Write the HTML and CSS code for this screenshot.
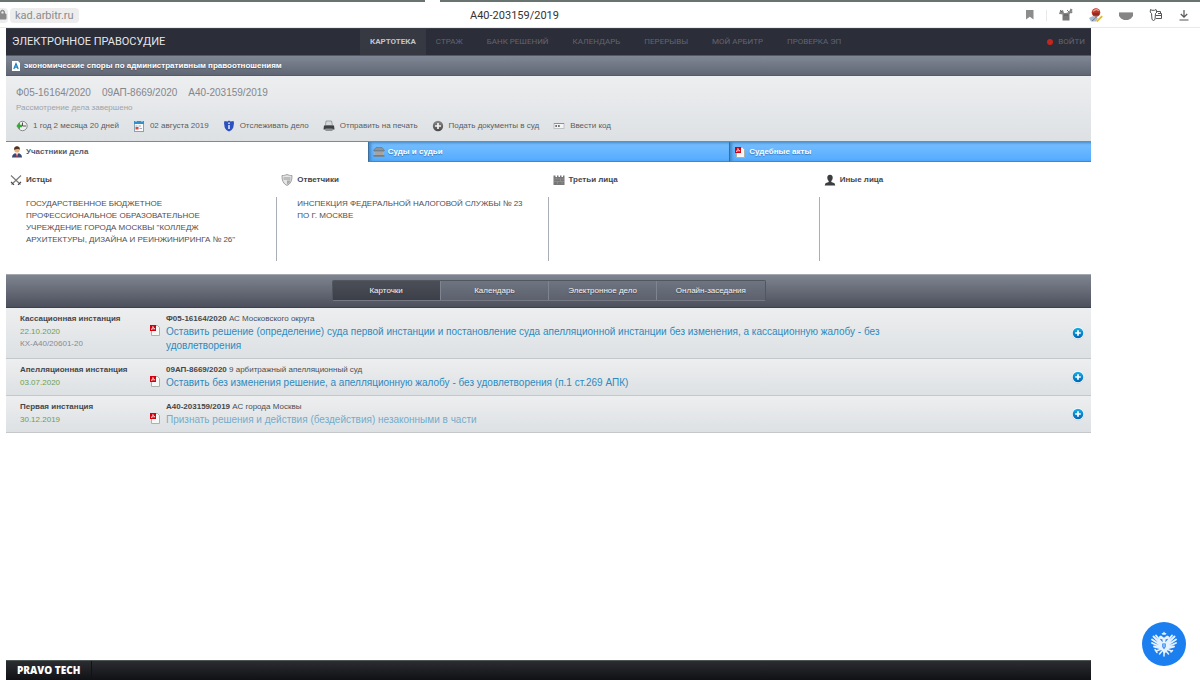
FILE: index.html
```html
<!DOCTYPE html>
<html lang="ru">
<head>
<meta charset="utf-8">
<title>А40-203159/2019</title>
<link rel="stylesheet" href="styles.css">
</head>
<body>
<svg class="defs" aria-hidden="true">
  <defs>
    <linearGradient id="blue" x1="0" y1="0" x2="0" y2="1"><stop offset="0" stop-color="#18b0ea"/><stop offset="1" stop-color="#0064b4"/></linearGradient>
    <linearGradient id="gray" x1="0" y1="0" x2="0" y2="1"><stop offset="0" stop-color="#8a8a8a"/><stop offset="1" stop-color="#484848"/></linearGradient>
    <symbol id="pdf" viewBox="0 0 12 12">
      <path d="M2.500 1.500h6l2 2v8h-8z" fill="#f6f8f6" stroke="#a9b3ab"/>
      <rect x="1" y="1" width="6" height="6" fill="#d4000e"/>
      <path d="M2.200 5.400C3.600 4.800 4 3.600 3.900 2.400c.3 1.400 1 2.200 2.200 2.400-1.500-.2-2.600 0-3.900.6z" fill="none" stroke="#fff" stroke-width=".7"/>
    </symbol>
    <symbol id="plus" viewBox="0 0 14 14">
      <circle cx="7" cy="7.600" r="6.200" fill="#cfd5da"/>
      <circle cx="7" cy="7" r="5.900" fill="#fff"/>
      <circle cx="7" cy="7" r="5.300" fill="url(#blue)"/>
      <path d="M7 4.200v5.600M4.200 7h5.600" stroke="#fff" stroke-width="1.700"/>
    </symbol>
  </defs>
</svg>

<header class="browser">
  <div class="address">
    <span class="lock"><svg viewBox="0 0 10 12" width="10" height="12"><path d="M1 5h7v5H1zM2.500 5V3.200a2 2 0 0 1 4 0V5" fill="#8a8a8a" stroke="#8a8a8a"/><path d="M3.500 4.600V3.300a1 1 0 0 1 2 0v1.300z" fill="#ededed"/></svg></span>
    <span class="host">kad.arbitr.ru</span>
  </div>
  <div class="page-name">А40-203159/2019</div>
  <div class="tools">
    <svg width="8" height="10" viewBox="0 0 8 10"><path d="M0 0h7.500v9.600L3.800 6.800 0 9.600z" fill="#8c8c8c"/></svg>
    <span class="tools-line"></span>
    <svg width="14" height="14" viewBox="0 0 14 14"><path d="M3.500 6h7v6.500h-7z" fill="#777"/><path d="M0 6l1-3 3-1 1 3 2 0 3-1 1.500-3.500 2 1-1 3-2 1.500-3 1-3-.5z" fill="#858585"/><path d="M1 2l2 2M12 5l1.500-1M8 2l2 2M5 7h4" stroke="#555" stroke-width=".8"/></svg>
    <svg width="14" height="14" viewBox="0 0 14 14"><circle cx="7" cy="4.500" r="4.300" fill="#b93626"/><path d="M4.200 3.500c1-2 4-2.500 5.600-.6" stroke="#ec9c8f" stroke-width="1.300" fill="none"/><path d="M4 6h6" stroke="#63241c"/><path d="M0 10l4-2 5 2-2 3.500H2z" fill="#a9bbcf"/><path d="M7 13l5.500-5.500 1.300 1.300L8.500 14z" fill="#e5b82c"/><path d="M3 13c2-1 3-4 5-4" stroke="#68788c" fill="none"/></svg>
    <svg width="14" height="14" viewBox="0 0 14 14"><path d="M0 5h14v3l-2 2.500-3 1.500H5L2 10.500 0 8z" fill="#858585"/><path d="M0 4.500h14" stroke="#b5b5b5"/></svg>
    <svg width="14" height="14" viewBox="0 0 14 14" fill="none" stroke="#555"><path d="M1.500 1.500l1.500.8h2.500l1.500-.8 1 2.500-1.500 1.500-.5 6-1.500 1-1.500-1-.5-6L1.200 4z"/><path d="M7.500 4.500v-1h4v2M7 7.500h5.500M7 10.500h5.500v-5H9"/></svg>
    <svg width="10" height="12" viewBox="0 0 10 12" fill="none" stroke="#555" stroke-width="1.200"><path d="M5 1v7M1.800 5L5 8.200 8.200 5M.5 11h9"/></svg>
  </div>
</header>

<main class="portal">
  <div class="masthead">
    <a class="brand" href="#">ЭЛЕКТРОННОЕ ПРАВОСУДИЕ</a>
    <nav class="menu">
      <a class="menu-item active" href="#">КАРТОТЕКА</a>
      <a class="menu-item" href="#">СТРАЖ</a>
      <a class="menu-item" href="#">БАНК РЕШЕНИЙ</a>
      <a class="menu-item" href="#">КАЛЕНДАРЬ</a>
      <a class="menu-item" href="#">ПЕРЕРЫВЫ</a>
      <a class="menu-item" href="#">МОЙ АРБИТР</a>
      <a class="menu-item" href="#">ПРОВЕРКА ЭП</a>
    </nav>
    <a class="login" href="#">ВОЙТИ</a>
  </div>

  <h1 class="category">
    <svg width="8" height="10" viewBox="0 0 8 10"><path d="M0 0h6l2 2v8H0z" fill="#fff"/><path d="M1.800 8L4 2.500 6.200 8M2.700 6.200h2.600" stroke="#1580bd" stroke-width="1.200" fill="none"/></svg>
    экономические споры по административным правоотношениям
  </h1>

  <section class="summary">
    <ul class="numbers"><li>Ф05-16164/2020</li><li>09АП-8669/2020</li><li>А40-203159/2019</li></ul>
    <p class="status">Рассмотрение дела завершено</p>
    <ul class="actions">
      <li><svg width="12" height="12" viewBox="0 0 12 12"><circle cx="6.500" cy="6" r="4.700" fill="#eef0ef" stroke="#858b88"/><path d="M6.500 2.500V6H10" fill="none" stroke="#555"/><path d="M6 4.700H4V2.500L.3 6 4 9.500V7.300h2z" fill="#31ad31"/></svg><span>1 год 2 месяца 20 дней</span></li>
      <li><svg width="12" height="12" viewBox="0 0 12 12"><rect x="1.500" y="1.500" width="9" height="10" fill="#f8fafc" stroke="#8aa1b3"/><path d="M1 1h10v3H1z" fill="#3291cc"/><path d="M3 0v2M9 0v2" stroke="#d5e9f5"/><path d="M2.500 6h2M5.500 6H8" stroke="#9aabb8"/><path d="M2.500 7h3v2.500h-3z" fill="#d8483e"/><path d="M6.500 8.500H9" stroke="#9aabb8"/></svg><span>02 августа 2019</span></li>
      <li><a href="#"><svg width="12" height="12" viewBox="0 0 12 12"><path d="M6 .5l1.500 1 3-.5L11 3l-.7 4.500C9.500 9.500 8 10.700 6 11.500 4 10.700 2.500 9.500 1.700 7.500L1 3l.5-2 3 .5z" fill="#2c50c2"/><path d="M6 2.500v1.500M6 5v4" stroke="#dce7ff" stroke-width="1.600"/></svg><span>Отслеживать дело</span></a></li>
      <li><a href="#"><svg width="12" height="12" viewBox="0 0 12 12"><path d="M3 1h5.500l1 4.500h-7z" fill="#d5d9dc" stroke="#80868a" stroke-width=".7"/><path d="M1 5.500h10l.5 4h-11z" fill="#3e4143"/><path d="M2.500 8.500h7V11h-7z" fill="#8d9295"/></svg><span>Отправить на печать</span></a></li>
      <li><a href="#"><svg width="12" height="12" viewBox="0 0 12 12"><circle cx="6" cy="6" r="5.200" fill="url(#gray)"/><path d="M6 3v6M3 6h6" stroke="#f4f4f4" stroke-width="1.700"/></svg><span>Подать документы в суд</span></a></li>
      <li><a href="#"><svg width="12" height="12" viewBox="0 0 12 12"><rect x="1" y="3.500" width="10" height="5" fill="#f5f5f5" stroke="#bfc2c4"/><path d="M1 3.500h10" stroke="#8e9193"/><path d="M2.300 6h1.700M5 6h1.700M3.200 5v2M5.900 5v2" stroke="#505254"/></svg><span>Ввести код</span></a></li>
    </ul>
  </section>

  <nav class="tabs">
    <button class="tab current" type="button"><svg width="12" height="12" viewBox="0 0 12 12"><path d="M1 11.500C1 8.500 3 7 6 7s5 1.500 5 4.500z" fill="#394b75"/><path d="M4.500 7h3L6 10.500z" fill="#fff"/><path d="M5.600 7.500h.8L6.700 11H5.300z" fill="#c33"/><circle cx="6" cy="4" r="2.600" fill="#eab07e"/><path d="M3.200 4C2.800 1 4.500.3 6 .3S9.200 1 8.800 4C8 2.500 5 3 3.200 4z" fill="#53321d"/></svg>Участники дела</button>
    <button class="tab" type="button"><svg width="12" height="12" viewBox="0 0 12 12"><path d="M.5 4.500L3 1.500h6l2.500 3z" fill="#8e9599" stroke="#667279" stroke-width=".6"/><path d="M1.500 5h9v4h-9z" fill="#b8b4aa"/><path d="M.5 9h11v1.800H.5zM1 4.500h10v1H1z" fill="#777d80"/><path d="M3 5.500V9M5 5.500V9M7 5.500V9M9 5.500V9" stroke="#888" stroke-width=".7"/></svg>Суды и судьи</button>
    <button class="tab" type="button"><svg width="12" height="12"><use href="#pdf"/></svg>Судебные акты</button>
  </nav>

  <section class="parties">
    <div class="party">
      <h2><svg width="12" height="12" viewBox="0 0 12 12"><path d="M1 1.500l9.500 9M11 1.500l-9.500 9" stroke="#777" stroke-width="1.100"/><path d="M1 7.800l3 3M11 7.800l-3 3" stroke="#444" stroke-width="1.200"/></svg>Истцы</h2>
      <p>ГОСУДАРСТВЕННОЕ БЮДЖЕТНОЕ ПРОФЕССИОНАЛЬНОЕ ОБРАЗОВАТЕЛЬНОЕ УЧРЕЖДЕНИЕ ГОРОДА МОСКВЫ "КОЛЛЕДЖ АРХИТЕКТУРЫ, ДИЗАЙНА И РЕИНЖИНИРИНГА № 26"</p>
    </div>
    <div class="party wide">
      <h2><svg width="12" height="12" viewBox="0 0 12 12"><path d="M1 1.500C3 1.800 4.500 1 6 .5 7.500 1 9 1.800 11 1.500c.3 5-1.500 8.500-5 10-3.500-1.500-5.300-5-5-10z" fill="#e5e5e5" stroke="#8d8d8d" stroke-width=".8"/><path d="M2.500 3h7v3h-7z" fill="#bdbdbd"/><path d="M6 6.500h3.500C9 8.500 8 9.800 6 10.500z" fill="#aaa"/></svg>Ответчики</h2>
      <p>ИНСПЕКЦИЯ ФЕДЕРАЛЬНОЙ НАЛОГОВОЙ СЛУЖБЫ № 23 ПО Г. МОСКВЕ</p>
    </div>
    <div class="party">
      <h2><svg width="12" height="12" viewBox="0 0 12 12"><path d="M.5 1.500h2v1.500h1.500V1.500h1.500V3H7V1.500h1.500V3H10V1.500h1.500V11H.5z" fill="#777"/><path d="M1 5h10M1 7.500h10M3.500 3.500V5M7.500 5v2.500M4.500 7.500V10M9 7.500V10" stroke="#999" stroke-width=".6"/></svg>Третьи лица</h2>
      <p></p>
    </div>
    <div class="party">
      <h2><svg width="12" height="12" viewBox="0 0 12 12"><path d="M6 .8c2 0 2.900 1.300 2.700 3.200C8.500 5.600 7.900 6.500 7.300 7v1l3.200 1.300.8 2.200H.7l.8-2.200L4.700 8V7C4.100 6.500 3.500 5.600 3.300 4 3.100 2.100 4 .8 6 .8z" fill="#3b3d3e"/></svg>Иные лица</h2>
      <p></p>
    </div>
  </section>

  <div class="views">
    <div class="switch">
      <button class="view selected" type="button">Карточки</button>
      <button class="view" type="button">Календарь</button>
      <button class="view" type="button">Электронное дело</button>
      <button class="view" type="button">Онлайн-заседания</button>
    </div>
  </div>

  <section class="instances">
    <article class="instance">
      <div class="stage"><h3>Кассационная инстанция</h3><span class="date">22.10.2020</span><span class="ref">КХ-А40/20601-20</span></div>
      <svg class="doc" width="12" height="12"><use href="#pdf"/></svg>
      <div class="result"><p><b>Ф05-16164/2020</b> АС Московского округа</p><a href="#">Оставить решение (определение) суда первой инстанции и постановление суда апелляционной инстанции без изменения, а кассационную жалобу - без удовлетворения</a></div>
      <button class="expand" type="button" aria-label="Развернуть"><svg width="14" height="14"><use href="#plus"/></svg></button>
    </article>
    <article class="instance">
      <div class="stage"><h3>Апелляционная инстанция</h3><span class="date">03.07.2020</span></div>
      <svg class="doc" width="12" height="12"><use href="#pdf"/></svg>
      <div class="result"><p><b>09АП-8669/2020</b> 9 арбитражный апелляционный суд</p><a href="#">Оставить без изменения решение, а апелляционную жалобу - без удовлетворения (п.1 ст.269 АПК)</a></div>
      <button class="expand" type="button" aria-label="Развернуть"><svg width="14" height="14"><use href="#plus"/></svg></button>
    </article>
    <article class="instance">
      <div class="stage"><h3>Первая инстанция</h3><span class="date">30.12.2019</span></div>
      <svg class="doc" width="12" height="12"><use href="#pdf"/></svg>
      <div class="result"><p><b>А40-203159/2019</b> АС города Москвы</p><a class="seen" href="#">Признать решения и действия (бездействия) незаконными в части</a></div>
      <button class="expand" type="button" aria-label="Развернуть"><svg width="14" height="14"><use href="#plus"/></svg></button>
    </article>
  </section>

  <footer class="footer"><a href="#">PRAVO TECH</a></footer>
</main>

<button class="emblem" type="button" aria-label="Госуслуги">
  <svg width="28" height="28" viewBox="0 0 28 28" fill="#e6f2ff" stroke="#e6f2ff" stroke-linecap="round">
    <path d="M14 1.500l1 1.500 1.500.3-1 1.500h-3l-1-1.500 1.500-.3z" stroke="none"/>
    <path d="M12.500 12V9.500l-2.500-.7-1.800.5L9 6.500l2-1 2.500 2h1l2.500-2 2 1 .8 2.800-1.800-.5-2.500.7V12l3 2-1 6-3 4-3-4-1-6z" stroke="none"/>
    <path d="M11 14L3.500 6.500M11 15.500L2 9.500M11 17L2 13M11.500 18.500L4 16.500M12 13L6 5.500M17 14l7.500-7.500M17 15.500l9-6M17 17l9-4M16.500 18.500l7.500-2M16 13l6-7.500" stroke-width="1.900"/>
    <path d="M12 19l-6 2M16 19l5.500 2M5 19.500l2 3M22.500 20.500l-1.500 1.500M12 21l-2.500 3M16 21l2.500 3M14 22v4" fill="none" stroke-width="1.500"/>
    <path d="M12.300 13.500h3.400v3.500L14 19.200 12.300 17z" fill="#1c7ff0" stroke="none"/>
    <path d="M14 14.500v2.500" stroke-width="1"/>
  </svg>
</button>
</body>
</html>
```

FILE: styles.css
```css
* { box-sizing: border-box; }
body {
  margin: 0;
  min-height: 100vh;
  display: flex;
  flex-direction: column;
  background: #fff;
  color: #4c4f54;
  font: 8px/12px "Liberation Sans", Arial, sans-serif;
}
h1, h2, h3, p, ul { margin: 0; padding: 0; font-size: inherit; }
ul { list-style: none; }
a { color: inherit; text-decoration: none; }
button { margin: 0; padding: 0; border: 0; background: none; font: inherit; color: inherit; cursor: pointer; }
svg { flex: none; display: block; }
.defs { position: absolute; width: 0; height: 0; }

/* Browser bar */
.browser {
  display: grid;
  grid-template-columns: 1fr auto 1fr;
  align-items: center;
  height: 28px;
  padding: 3px 11px 0 0;
  background: linear-gradient(90deg, #69736f 425px, #fff 425px, #fff 440px, #69736f 440px) top / 100% 2px no-repeat;
  border-bottom: 1px solid #e9e9e9;
}
.address { display: flex; align-items: center; gap: 2px; }
.lock { display: flex; align-items: center; width: 8px; height: 15px; border-radius: 0 4px 4px 0; background: #ededed; justify-content: flex-end; overflow: hidden; }
.host { padding: 0 5px; border-radius: 4px; background: #ededed; color: #8b8b8b; font: 11px/15px Roboto, sans-serif; }
.page-name { color: #333; font: 11px/15px Roboto, sans-serif; padding-right: 160px; }
.tools { display: flex; justify-content: flex-end; align-items: center; gap: 16px; }
.tools-line { width: 1px; height: 11px; background: #e9e9e9; margin-right: -4px; margin-left: -4px; }

/* Portal */
.portal { flex: 1; display: flex; flex-direction: column; margin: 0 109px 0 6px; }
.masthead { display: flex; height: 28px; background: #2b2d38; border-bottom: 1px solid #535866; border-top: 1px solid #3c3f48; }
.brand { width: 354px; padding-left: 6px; color: #e6e6e8; font: 11px/26px Roboto, sans-serif; }
.menu { display: flex; color: #62656f; font: 8px/26px Roboto, sans-serif; }
.menu-item { padding: 0 12px; }
.menu-item.active { margin-right: -2px; padding: 0 10px; background: #363842; color: #c3c4c8; font-weight: bold; }
.login { display: flex; align-items: center; gap: 5px; margin-left: auto; padding-right: 6px; color: #62656f; font: 8px/26px Roboto, sans-serif; }
.login::before { content: ""; width: 6px; height: 6px; border-radius: 50%; background: #c4261d; }
.category {
  display: flex; align-items: center; gap: 4px; height: 20px; padding-left: 6px;
  background: linear-gradient(#818895, #606673); color: #fff; border-bottom: 1px solid #555b67;
  font-weight: bold; text-shadow: 0 1px 1px #4b505b;
}
.summary { padding: 10px 10px 8px; background: linear-gradient(#edeef0, #dde1e4); border-bottom: 1px solid #818895; color: #5a5d62; }
.numbers { display: flex; gap: 11px; color: #84878c; font-size: 10px; line-height: 14px; }
.status { margin-top: 2px; color: #a0a3a7; }
.actions { display: flex; gap: 14px; margin-top: 5px; line-height: 14px; }
.actions li, .actions a { display: flex; align-items: center; gap: 5px; }

.tabs { display: grid; grid-template-columns: 1fr 1fr 1fr; height: 20px; }
.tab {
  display: flex; align-items: center; gap: 3px; padding-left: 4px; color: #fff; font-weight: bold;
  background: linear-gradient(#78bfff, #54acff); border-left: 1px solid #3c6d9b; border-bottom: 1px solid #4687c2;
  box-shadow: inset 2px 1px 3px #4389c6; text-shadow: 0 1px 1px #3a7cb8;
}
.tab.current { background: #fff; border-color: #fff; box-shadow: none; color: #555a70; text-shadow: none; }

.parties { display: grid; grid-template-columns: repeat(4, 1fr); padding: 12px 0 13px; }
.party { display: flex; flex-direction: column; padding-left: 4px; }
.party h2 { display: flex; align-items: center; gap: 4px; color: #44474b; }
.party p { height: 64px; margin-top: 11px; padding: 1px 32px 0 16px; }
.party.wide p { padding-right: 20px; }
.party:not(:last-child) p { border-right: 1px solid #a9adb6; }

.views { display: flex; justify-content: center; padding: 5px 0 6px; background: linear-gradient(#7f8590, #4c505c); border-top: 1px solid #a4a8b0; border-bottom: 1px solid #3d414b; }
.switch { display: flex; width: 40%; height: 21px; border: 1px solid #51565f; border-bottom-color: #747984; border-radius: 2px; }
.view { flex: 1; color: #f2f2f3; background: linear-gradient(#6f7580, #5c616d); border-left: 1px solid #7f8590; text-shadow: 0 1px 1px #40444c; }
.view.selected { background: linear-gradient(#4b4f58, #3c3f48); border-left: 0; }

.instance {
  display: flex; padding: 4px 6px 5px 14px; background: linear-gradient(#edeeef, #dde1e4);
  border-bottom: 1px solid #c5c8ca;
}
.stage { display: flex; flex-direction: column; width: 129px; }
.stage h3, .result p { line-height: 13px; }
.stage h3, .result b { color: #44474b; }
.date { color: #6fa04e; line-height: 13px; }
.ref { color: #888b90; line-height: 11px; }
.doc { margin: 12px 5px 0 0; }
.result { width: 736px; }
.result a { display: block; color: #2c8abf; font-size: 10px; line-height: 14px; }
.result a.seen { color: #74acca; }
.expand { align-self: center; margin-left: auto; }

.footer { margin-top: auto; height: 20px; border-top: 1px solid #4c5652; background: linear-gradient(#2b2d33, #101114); }
.footer a { display: inline-block; padding: 0 11px; border-right: 1px solid #111215; color: #fff; font: 800 10px/18px "Open Sans", sans-serif; }

.emblem { position: fixed; right: 14px; bottom: 14px; display: grid; place-items: center; width: 44px; height: 44px; border-radius: 50%; background: #1c7ff0; }
```
